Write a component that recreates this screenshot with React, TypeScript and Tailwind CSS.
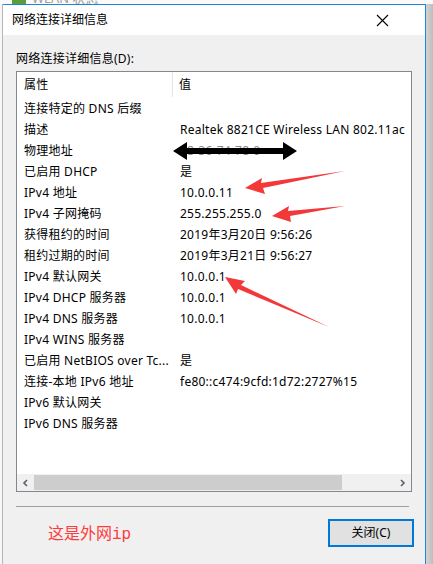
import React from "react";

const rows: [string, string][] = [
  ["连接特定的 DNS 后缀", ""],
  ["描述", "Realtek 8821CE Wireless LAN 802.11ac"],
  ["物理地址", "78-36-74-78-0"],
  ["已启用 DHCP", "是"],
  ["IPv4 地址", "10.0.0.11"],
  ["IPv4 子网掩码", "255.255.255.0"],
  ["获得租约的时间", "2019年3月20日 9:56:26"],
  ["租约过期的时间", "2019年3月21日 9:56:27"],
  ["IPv4 默认网关", "10.0.0.1"],
  ["IPv4 DHCP 服务器", "10.0.0.1"],
  ["IPv4 DNS 服务器", "10.0.0.1"],
  ["IPv4 WINS 服务器", ""],
  ["已启用 NetBIOS over Tc...", "是"],
  ["连接-本地 IPv6 地址", "fe80::c474:9cfd:1d72:2727%15"],
  ["IPv6 默认网关", ""],
  ["IPv6 DNS 服务器", ""],
];

const font = { fontFamily: '"Noto Sans", "Noto Sans CJK SC", sans-serif' };

const App = () => {
  return (
    <div
      className="relative w-[433px] h-[564px] overflow-hidden bg-[#f3f3f3] text-[12px] text-black"
      style={font}
    >
      {/* window behind */}
      <div className="h-[4px] overflow-hidden bg-[#fafafa] flex items-start pl-[12px]">
        <div className="flex items-center gap-[6px] -mt-[9px] text-[#a0a0a0] text-[13px] leading-[14px]">
          <span className="w-[14px] h-[12px] bg-[#5a9e3c]" />
          <span>WLAN 状态</span>
        </div>
      </div>

      <div className="flex h-[560px]">
        <div className="w-[3px] bg-[#f7f7f7] border-r border-[#b5b5b5]" />
        {/* dialog */}
        <div className="w-[423px] flex flex-col border-t border-r border-[#1c86dc] bg-[#f0f0f0]">
          <div className="h-[30px] bg-white flex items-center justify-between pl-[9px] pr-[36px]">
            <span className="text-[12px]">网络连接详细信息</span>
            <svg width="13" height="13" viewBox="0 0 13 13">
              <path d="M1 1L12 12M12 1L1 12" stroke="#000" strokeWidth="1.1" />
            </svg>
          </div>

          <div className="flex flex-col pl-[13px] pt-[16px] tracking-[0.25px]">
            <div className="leading-[16px] h-[20px]">网络连接详细信息(D):</div>

            <div className="w-[396px] h-[421px] border border-[#828790] bg-white flex flex-col">
              <div className="flex h-[25px] items-center">
                <div className="w-[156px] pl-[7px] border-r border-[#e5e5e5] h-[25px] flex items-center">
                  属性
                </div>
                <div className="pl-[6px]">值</div>
              </div>
              <div className="flex flex-col flex-1 pt-[1px]">
                {rows.map(([k, v], i) => (
                  <div key={i} className="flex h-[21px] items-center whitespace-nowrap">
                    <div className="w-[157px] pl-[7px]">{k}</div>
                    <div className={`pl-[6px] ${i === 2 ? "text-[#8a8a8a]" : ""}`}>{v}</div>
                  </div>
                ))}
              </div>
              {/* horizontal scrollbar */}
              <div className="h-[17px] flex items-center bg-[#f0f0f0]">
                <div className="w-[17px] flex justify-center">
                  <svg width="7" height="8" viewBox="0 0 7 8">
                    <path d="M5 1L2 4L5 7" stroke="#606060" strokeWidth="1.6" fill="none" />
                  </svg>
                </div>
                <div className="w-[308px] h-[15px] bg-[#cdcdcd]" />
                <div className="flex-1" />
                <div className="w-[17px] flex justify-center">
                  <svg width="7" height="8" viewBox="0 0 7 8">
                    <path d="M2 1L5 4L2 7" stroke="#606060" strokeWidth="1.6" fill="none" />
                  </svg>
                </div>
              </div>
            </div>

            <div className="w-[393px] h-[1px] bg-[#a0a0a0] mt-[14px]" />

            <div className="flex items-center justify-between w-[398px] mt-[12px]">
              <span
                className="pl-[32px] text-[16px] text-[#ff3a3a] tracking-normal"
                style={{ fontFamily: '"Noto Sans CJK SC", sans-serif' }}
              >
                这是外网
                <span style={{ fontFamily: '"Liberation Mono", monospace' }}>ip</span>
              </span>
              <button className="w-[86px] h-[28px] border-2 border-[#0078d7] bg-[#e1e1e1] text-[12px] tracking-normal">
                关闭(C)
              </button>
            </div>
          </div>
        </div>
        <div className="flex-1 bg-gradient-to-r from-[#d4d4d4] to-[#bdbdbd]" />
      </div>

      {/* annotations */}
      <svg className="absolute left-0 top-0 pointer-events-none" width="433" height="564">
        <polygon points="173,151 187,142 187,148 283,148 283,142 297,151 283,160 283,154 187,154 187,160" fill="#000" />
        <polygon points="245,188 262,178 261,183 345,171 263,188 265,194" fill="#f23838" />
        <polygon points="272,216 289,206 288,211 345,206 290,216 291,222" fill="#f23838" />
        <polygon points="225,277 245,281 241,285 329,327 238,289 236,294" fill="#f23838" />
      </svg>
    </div>
  );
};

export default App;
